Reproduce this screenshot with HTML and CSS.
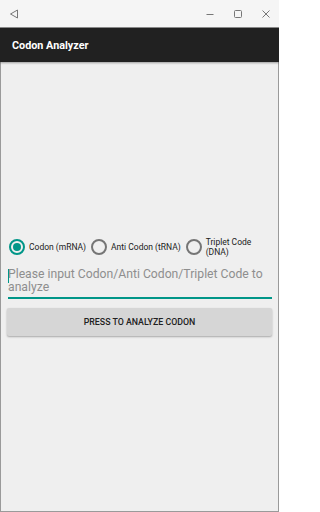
FILE: index.html
```html
<!DOCTYPE html>
<html>
<head>
<meta charset="utf-8">
<link rel="stylesheet" href="styles.css">
</head>
<body>
<div class="window">
  <div class="titlebar">
    <svg class="back" width="10" height="10" viewBox="0 0 10 10"><path d="M8.5 1 L1.5 5 L8.5 9 Z" fill="none" stroke="#777" stroke-width="1"/></svg>
    <div class="spacer"></div>
    <svg class="ctl" width="10" height="10" viewBox="0 0 10 10"><path d="M1.5 5.5 H8.5" stroke="#777" stroke-width="1"/></svg>
    <svg class="ctl" width="10" height="10" viewBox="0 0 10 10"><rect x="1.5" y="1.5" width="7" height="7" rx="1" fill="none" stroke="#777" stroke-width="1"/></svg>
    <svg class="ctl" width="10" height="10" viewBox="0 0 10 10"><path d="M1.5 1.5 L8.5 8.5 M8.5 1.5 L1.5 8.5" stroke="#777" stroke-width="1"/></svg>
  </div>
  <div class="appbar">Codon Analyzer</div>
  <div class="content">
    <div class="radios">
      <label class="radio"><span class="ring checked"><span class="dot"></span></span><span class="rlabel">Codon (mRNA)</span></label>
      <label class="radio"><span class="ring"></span><span class="rlabel">Anti Codon (tRNA)</span></label>
      <label class="radio"><span class="ring"></span><span class="rlabel narrow">Triplet Code (DNA)</span></label>
    </div>
    <div class="field">
      <span class="cursor"></span>
      <span class="placeholder">Please input Codon/Anti Codon/Triplet Code to analyze</span>
    </div>
    <div class="button">PRESS TO ANALYZE CODON</div>
  </div>
</div>
</body>
</html>
```
FILE: styles.css
```css
html, body {
  margin: 0;
  padding: 0;
}
body {
  width: 279px;
  height: 512px;
  overflow: hidden;
  font-family: Roboto, "Noto Sans", sans-serif;
}
.window {
  box-sizing: border-box;
  width: 279px;
  height: 512px;
  background: #efefef;
  border-left: 1px solid #9a9a9a;
  border-right: 1px solid #9a9a9a;
  border-bottom: 1px solid #9a9a9a;
  display: flex;
  flex-direction: column;
}
.titlebar {
  height: 27px;
  background: #f5f5f5;
  border-bottom: 1px solid #8c8c8c;
  display: flex;
  align-items: center;
  padding: 0 8px 0 8px;
  margin: 0 -1px;
}
.back {
  margin-left: 1px;
}
.spacer {
  flex: 1;
}
.ctl {
  margin-left: 18px;
}
.appbar {
  height: 34px;
  background: #212121;
  color: #ffffff;
  font-weight: 700;
  font-size: 10.8px;
  display: flex;
  align-items: center;
  padding-left: 12px;
  box-shadow: 0 1px 2px rgba(0,0,0,0.35);
  margin: 0 -1px;
  position: relative;
}
.content {
  padding: 175px 6px 0 6px;
}
.radios {
  display: flex;
  align-items: center;
  height: 20px;
  padding-left: 2px;
}
.radio {
  display: flex;
  align-items: center;
  margin-right: 5px;
}
.ring {
  box-sizing: border-box;
  width: 16px;
  height: 16px;
  border: 2px solid #757575;
  border-radius: 50%;
  display: flex;
  align-items: center;
  justify-content: center;
  flex: none;
}
.ring.checked {
  border-color: #009688;
}
.dot {
  width: 8px;
  height: 8px;
  border-radius: 50%;
  background: #009688;
}
.rlabel {
  font-size: 8.5px;
  color: #212121;
  margin-left: 4px;
  line-height: 10px;
}
.rlabel.narrow {
  width: 50px;
}
.field {
  margin-top: 11px;
  margin-left: 1px;
  border-bottom: 2px solid #009688;
  position: relative;
  padding-bottom: 3px;
}
.placeholder {
  font-size: 12.2px;
  line-height: 13px;
  color: #8e8e8e;
  display: block;
}
.cursor {
  position: absolute;
  left: 0;
  top: 1px;
  width: 1px;
  height: 14px;
  background: #009688;
}
.button {
  margin-top: 9px;
  height: 28px;
  background: #d6d6d6;
  border-radius: 2px;
  box-shadow: 0 1px 2px rgba(0,0,0,0.3);
  display: flex;
  align-items: center;
  justify-content: center;
  font-size: 8.8px;
  font-weight: 500;
  color: #212121;
}
```
